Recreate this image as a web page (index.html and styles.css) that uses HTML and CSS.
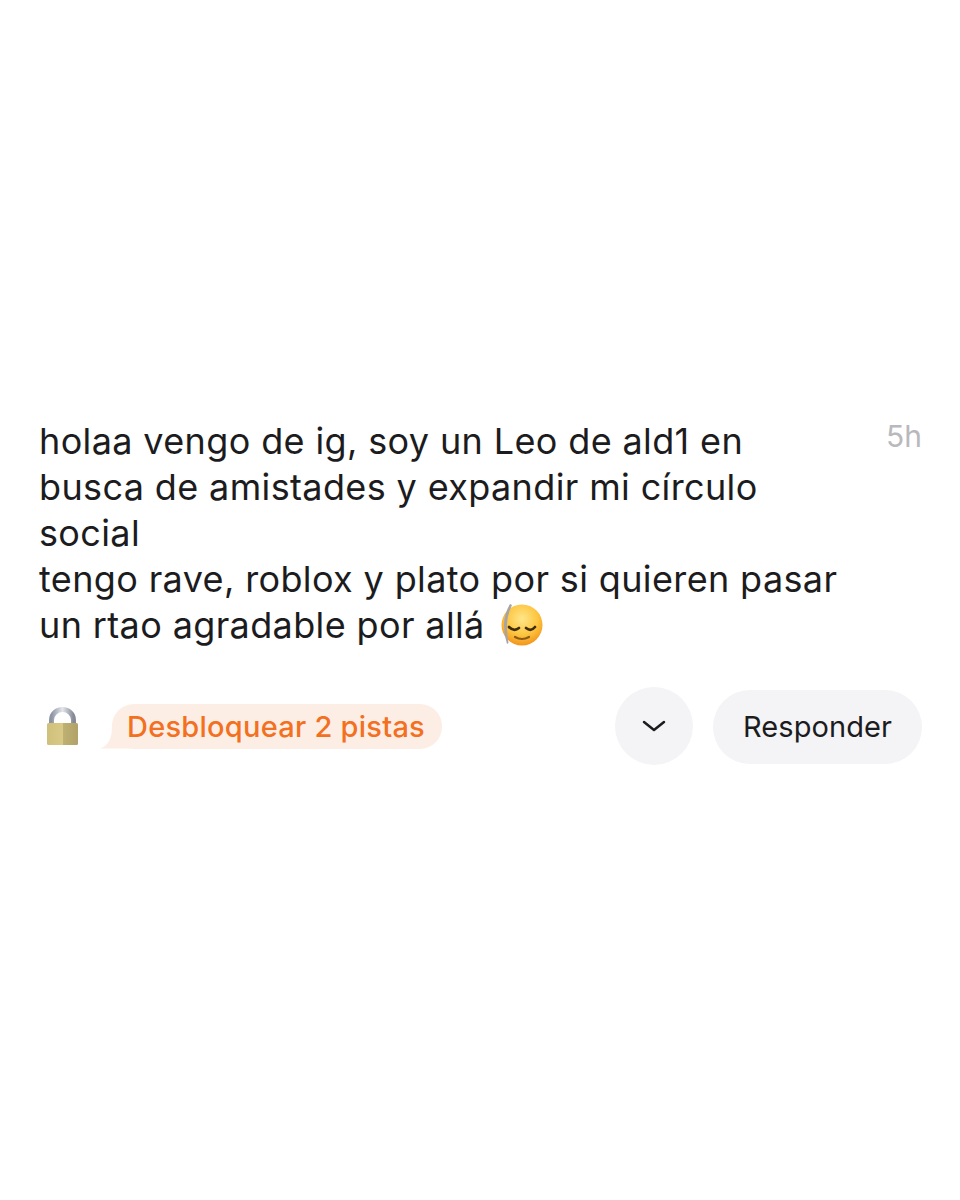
FILE: index.html

```html
<!DOCTYPE html>
<html lang="es">
<head>
<meta charset="UTF-8" />
<title>Mensaje</title>
<link rel="stylesheet" href="styles.css">
</head>
<body>

<div class="post">
  <div class="post-head">
    <p class="post-text">holaa vengo de ig, soy un Leo de ald1 en<br>busca de amistades y expandir mi círculo<br>social<br>tengo rave, roblox y plato por si quieren pasar<br>un rtao agradable por allá <svg class="emoji" viewBox="0 0 48 48" aria-hidden="true">
      <defs>
        <radialGradient id="face" cx="50%" cy="35%" r="65%">
          <stop offset="0" stop-color="#ffe68a"/>
          <stop offset="0.6" stop-color="#fdc53f"/>
          <stop offset="1" stop-color="#f2951c"/>
        </radialGradient>
      </defs>
      <circle cx="25" cy="24" r="20.5" fill="url(#face)"/>
      <path d="M13 3 Q7 13 7 24 Q7 34 10 43 L11.5 42 Q9.5 32 10 23 Q10.5 13 15 4 Z" fill="#a5a4a8"/>
      <path d="M12 26 Q17 31 22 27 M29 27 Q34 31 38 26" fill="none" stroke="#3f2b0e" stroke-width="2.6" stroke-linecap="round"/>
      <path d="M18 36 Q25 40 32 36" fill="none" stroke="#8a5a16" stroke-width="2.2" stroke-linecap="round"/>
    </svg></p>
    <span class="post-time">5h</span>
  </div>

  <div class="post-actions">
    <svg class="lock" viewBox="0 0 36 40" aria-hidden="true">
      <defs>
        <linearGradient id="shackle" x1="0" y1="0" x2="1" y2="0">
          <stop offset="0" stop-color="#8d94a3"/>
          <stop offset="0.5" stop-color="#e4e6eb"/>
          <stop offset="1" stop-color="#868a96"/>
        </linearGradient>
        <linearGradient id="brass" x1="0" y1="0" x2="1" y2="0">
          <stop offset="0" stop-color="#cfc07c"/>
          <stop offset="0.5" stop-color="#d8ca86"/>
          <stop offset="0.52" stop-color="#bfb172"/>
          <stop offset="1" stop-color="#b0a268"/>
        </linearGradient>
      </defs>
      <path d="M6.5 19 V14 a11 10.5 0 0 1 22 0 V19" fill="none" stroke="url(#shackle)" stroke-width="5"/>
      <rect x="2" y="17" width="31" height="22" rx="1.5" fill="url(#brass)"/>
    </svg>
    <div class="hint">Desbloquear 2 pistas</div>
    <button class="btn-more" aria-label="Más">
      <svg viewBox="0 0 24 12" class="chevron" aria-hidden="true"><path d="M2 2 L12 10 L22 2" fill="none" stroke="#1c1c1e" stroke-width="2.5" stroke-linecap="round" stroke-linejoin="round"/></svg>
    </button>
    <button class="btn-reply">Responder</button>
  </div>
</div>

</body>
</html>
```

FILE: styles.css

```css
body {
  margin: 0;
  background: #fff;
  font-family: Inter, "Liberation Sans", sans-serif;
  color: #1c1c1e;
}
.post {
  padding: 418px 38px 0 39px;
}
.post-head {
  display: flex;
  justify-content: space-between;
  align-items: flex-start;
}
.post-text {
  margin: 0;
  font-size: 36px;
  letter-spacing: 0.37px;
  line-height: 46px;
  color: #1c1c1e;
}
.emoji {
  width: 48px;
  height: 48px;
  margin: -6px 0 -6px 2px;
  vertical-align: -5px;
}
.post-time {
  font-size: 30px;
  line-height: 36px;
  color: #b9b9bd;
}
.post-actions {
  display: flex;
  align-items: center;
  margin-top: 39px;
}
.lock {
  width: 36px;
  height: 40px;
  margin-left: 6px;
  margin-right: 20px;
}
.hint {
  position: relative;
  height: 45px;
  line-height: 45px;
  padding: 0 17px 0 15px;
  background: #fdeee5;
  color: #f2701f;
  font-size: 29px;
  letter-spacing: 0.25px;
  font-weight: 500;
  border-radius: 22px;
  margin-left: 11px;
}
.hint::before {
  content: "";
  position: absolute;
  left: -12px;
  bottom: 0;
  width: 34px;
  height: 22px;
  background: #fdeee5;
  clip-path: path("M0 22 Q12 18 12 0 L34 0 L34 22 Z");
  z-index: -1;
}
.btn-more {
  width: 78px;
  height: 78px;
  border: none;
  border-radius: 50%;
  background: #f4f4f6;
  margin-left: auto;
  display: flex;
  align-items: center;
  justify-content: center;
}
.chevron {
  width: 24px;
  height: 12px;
}
.btn-reply {
  width: 209px;
  height: 74px;
  margin: 3px 0 0 20px;
  align-self: flex-start;
  padding-bottom: 3px;
  border: none;
  border-radius: 37px;
  background: #f4f4f6;
  font-family: inherit;
  font-size: 29px;
  letter-spacing: 0.1px;
  color: #1c1c1e;
}
```
